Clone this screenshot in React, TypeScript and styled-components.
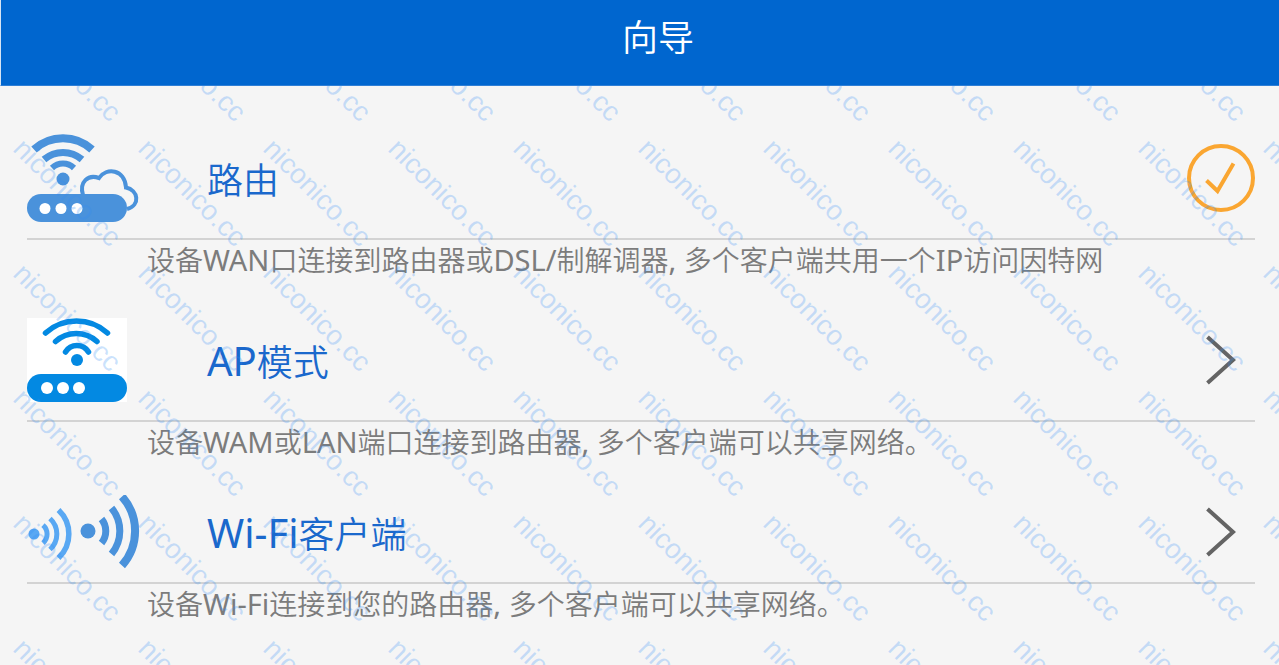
import React, { useEffect, useState } from 'react';
import styled, { createGlobalStyle } from 'styled-components';

const GlobalStyle = createGlobalStyle`
  *, *::before, *::after { box-sizing: border-box; }
  body {
    margin: 0;
    background: #f5f5f5;
    font-family: "Noto Sans", "Noto Sans CJK SC", sans-serif;
  }
`;

const Page = styled.div`
  position: relative;
  min-height: 100vh;
  overflow: hidden;
  background: #f5f5f5;
`;

const Header = styled.header`
  position: relative;
  z-index: 2;
  height: 86px;
  padding: 0 0 0 36px;
  border-left: 1px solid #d6e4f4;
  border-bottom: 1px solid #2f7fd6;
  background: #0066cf;
`;

const PageTitle = styled.h1`
  margin: 0;
  font-family: "Noto Sans CJK SC", sans-serif;
  font-size: 36px;
  font-weight: 350;
  line-height: 70px;
  text-align: center;
  color: #fff;
`;

const ModeList = styled.main`
  padding: 32px 24px 0 27px;
`;

const ModeItem = styled.section`
  display: flex;
  flex-direction: column;
`;

const ModeButton = styled.button<{ $compact?: boolean }>`
  display: flex;
  align-items: center;
  width: 100%;
  height: ${(p) => (p.$compact ? 102 : 122)}px;
  padding: 0;
  border: 0;
  border-bottom: 2px solid #d3d3d3;
  background: none;
  font-family: inherit;
  text-align: left;
  cursor: pointer;
`;

const IconSlot = styled.span`
  display: flex;
  flex: 0 0 180px;
  svg { display: block; }
`;

const ModeName = styled.span`
  flex: 1;
  font-family: "Noto Sans CJK SC", sans-serif;
  font-size: 36px;
  font-weight: 350;
  line-height: 56px;
  color: #1a68cc;
`;

const NameLatin = styled.span`
  font-family: "Noto Sans", sans-serif;
  font-size: 40px;
  font-weight: 400;
`;

const Description = styled.p`
  height: 60px;
  margin: 0 0 0 120px;
  font-family: "Noto Sans CJK SC", sans-serif;
  font-size: 28px;
  font-weight: 350;
  line-height: 38px;
  color: #7c7c7c;
`;

const TextLatin = styled.span`
  font-family: "Noto Sans", sans-serif;
  font-size: 29px;
  font-weight: 400;
`;

const StatusIcon = styled.svg`
  display: block;
  flex: 0 0 68px;
`;

const WatermarkLayer = styled.div<{ $cols: number }>`
  position: absolute;
  inset: 0;
  z-index: 1;
  display: grid;
  grid-template-columns: repeat(${(p) => p.$cols}, 125px);
  grid-auto-rows: 125px;
  align-content: start;
  padding: 9px 0 0 28px;
  overflow: hidden;
  pointer-events: none;
  user-select: none;
`;

const WatermarkText = styled.span`
  justify-self: start;
  align-self: start;
  font-family: "Liberation Sans", sans-serif;
  font-size: 28px;
  line-height: 28px;
  white-space: nowrap;
  color: rgba(50, 140, 245, 0.25);
  transform: rotate(45deg);
  transform-origin: 0 0;
`;

function Watermark() {
  const [size, setSize] = useState({ w: window.innerWidth, h: window.innerHeight });
  useEffect(() => {
    const update = () => setSize({ w: window.innerWidth, h: window.innerHeight });
    window.addEventListener('resize', update);
    return () => window.removeEventListener('resize', update);
  }, []);
  const cols = Math.ceil(size.w / 125);
  const rows = Math.ceil(size.h / 125);
  return (
    <WatermarkLayer $cols={cols} aria-hidden="true">
      {Array.from({ length: cols * rows }, (_, i) => (
        <WatermarkText key={i}>niconico.cc</WatermarkText>
      ))}
    </WatermarkLayer>
  );
}

const RouterIcon = () => (
  <svg width="112" height="88" viewBox="0 0 112 88" fill="none" stroke="#4a92db">
    <path d="M7 15.500A43 43 0 0 1 65 15.500" strokeWidth="8" />
    <path d="M17 25.500A29 29 0 0 1 55 25.500" strokeWidth="7" />
    <path d="M25 34A16 16 0 0 1 47 34" strokeWidth="6" />
    <circle cx="36" cy="45" r="6.500" fill="#4a92db" stroke="none" />
    <path d="M56 61C52 48 61 40 72 44C79 33 98 35 99 53.500C111 56 114 71 100 75" strokeWidth="4" />
    <rect y="60" width="100" height="28" rx="14" fill="#4a92db" stroke="none" />
    <g fill="#fff" stroke="none">
      <circle cx="18" cy="74.500" r="5.500" />
      <circle cx="34" cy="74.500" r="5.500" />
      <circle cx="50" cy="74.500" r="5.500" />
    </g>
  </svg>
);

const AccessPointIcon = () => (
  <svg width="100" height="84" viewBox="0 0 100 84" fill="none" stroke="#0389e2" strokeLinecap="round">
    <rect width="100" height="84" fill="#fff" stroke="none" />
    <path d="M18.500 15A46 46 0 0 1 80.500 15" strokeWidth="5.500" />
    <path d="M28.500 23.500A31 31 0 0 1 70 23.500" strokeWidth="5.500" />
    <path d="M38.500 34A13.500 13.500 0 0 1 61.500 34" strokeWidth="5.500" />
    <circle cx="50" cy="42" r="6" fill="#0389e2" stroke="none" />
    <rect y="56" width="100" height="28" rx="14" fill="#0389e2" stroke="none" />
    <g fill="#fff" stroke="none">
      <circle cx="20" cy="70" r="6" />
      <circle cx="36" cy="70" r="6" />
      <circle cx="52" cy="70" r="6" />
    </g>
  </svg>
);

const ClientIcon = () => (
  <svg width="114" height="74" viewBox="0 0 114 74" fill="none">
    <g stroke="#59a8f3">
      <circle cx="7" cy="39" r="5.500" fill="#59a8f3" stroke="none" />
      <path d="M16 30A12 12 0 0 1 16 48" strokeWidth="5" />
      <path d="M23 23.500A21 21 0 0 1 23 54.500" strokeWidth="5" />
      <path d="M31.500 15A33 33 0 0 1 31.500 63" strokeWidth="5.500" />
    </g>
    <g stroke="#4a92db">
      <circle cx="61" cy="36" r="7.500" fill="#4a92db" stroke="none" />
      <path d="M74.500 24A19 19 0 0 1 74.500 48" strokeWidth="7" />
      <path d="M84.500 13A36 36 0 0 1 84.500 59" strokeWidth="7" />
      <path d="M95 1.500A52 52 0 0 1 95 70.500" strokeWidth="8" />
    </g>
  </svg>
);

const CheckedIcon = () => (
  <StatusIcon width="68" height="68" viewBox="0 0 68 68" fill="none" stroke="#faa631" strokeWidth="4">
    <circle cx="34" cy="34" r="32" />
    <path d="M19.500 36.500L30.500 47L46.500 19.500" />
  </StatusIcon>
);

const ChevronIcon = () => (
  <StatusIcon width="68" height="68" viewBox="0 0 68 68" fill="none" stroke="#646464" strokeWidth="4">
    <path d="M20.500 11L46 34L20.500 57" />
  </StatusIcon>
);

export default function App() {
  return (
    <Page>
      <GlobalStyle />
      <Header>
        <PageTitle>向导</PageTitle>
      </Header>
      <ModeList>
        <ModeItem>
          <ModeButton type="button" aria-pressed="true">
            <IconSlot><RouterIcon /></IconSlot>
            <ModeName>路由</ModeName>
            <CheckedIcon />
          </ModeButton>
          <Description>
            设备<TextLatin>WAN</TextLatin>口连接到路由器或<TextLatin>DSL/</TextLatin>制解调器<TextLatin>, </TextLatin>多个客户端共用一个<TextLatin>IP</TextLatin>访问因特网
          </Description>
        </ModeItem>
        <ModeItem>
          <ModeButton type="button">
            <IconSlot><AccessPointIcon /></IconSlot>
            <ModeName><NameLatin>AP</NameLatin>模式</ModeName>
            <ChevronIcon />
          </ModeButton>
          <Description>
            设备<TextLatin>WAM</TextLatin>或<TextLatin>LAN</TextLatin>端口连接到路由器<TextLatin>, </TextLatin>多个客户端可以共享网络。
          </Description>
        </ModeItem>
        <ModeItem>
          <ModeButton type="button" $compact>
            <IconSlot><ClientIcon /></IconSlot>
            <ModeName><NameLatin>Wi-Fi</NameLatin>客户端</ModeName>
            <ChevronIcon />
          </ModeButton>
          <Description>
            设备<TextLatin>Wi-Fi</TextLatin>连接到您的路由器<TextLatin>, </TextLatin>多个客户端可以共享网络。
          </Description>
        </ModeItem>
      </ModeList>
      <Watermark />
    </Page>
  );
}
